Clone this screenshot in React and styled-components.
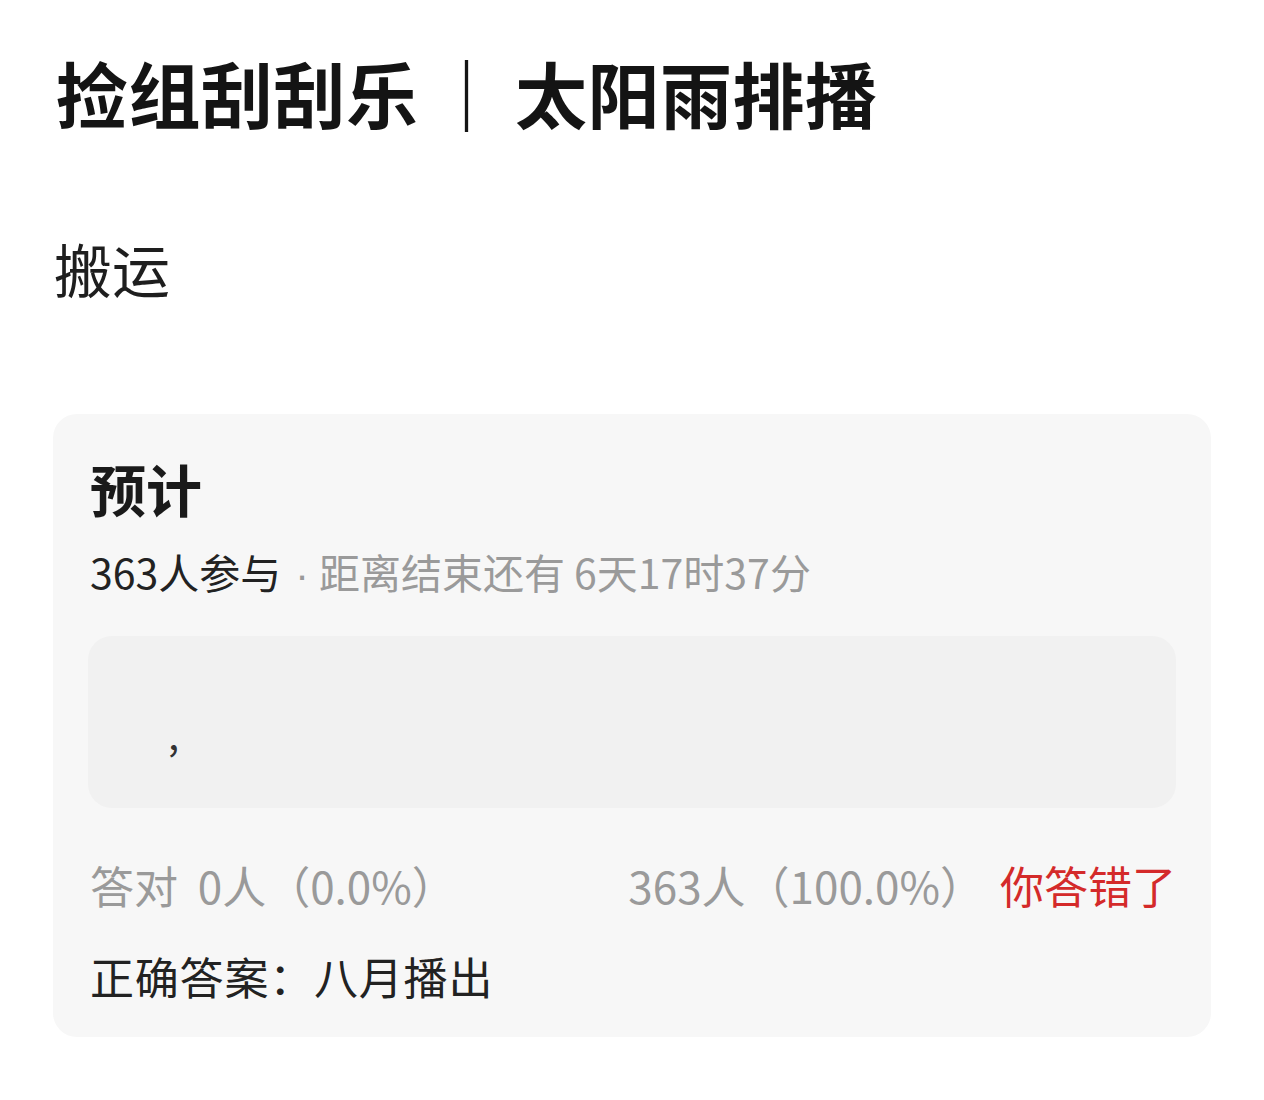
import React from 'react';
import styled, { createGlobalStyle } from 'styled-components';

const GlobalStyle = createGlobalStyle`
  html, body {
    margin: 0;
    padding: 0;
    background: #ffffff;
  }
  body {
    font-family: "Noto Sans CJK SC", "Noto Sans", sans-serif;
    color: #1a1a1a;
  }
`;

const Page = styled.div`
  width: 1264px;
  height: 1100px;
  box-sizing: border-box;
  padding: 52px 53px 0 53px;
  overflow: hidden;
`;

const Title = styled.h1`
  margin: 0 0 0 3px;
  font-size: 72px;
  line-height: 80px;
  font-weight: 700;
  color: #141414;
  letter-spacing: 0.5px;
`;

const Sep = styled.span`
  display: inline-block;
  margin: 0 12px;
`;

const Lead = styled.p`
  margin: 104px 0 0 1px;
  font-size: 58px;
  line-height: 64px;
  font-weight: 400;
  color: #1e1e1e;
`;

const Card = styled.section`
  margin-top: 114px;
  width: 1158px;
  box-sizing: border-box;
  background: #f7f7f7;
  border-radius: 24px;
  padding: 42px 35px 34px 35px;
`;

const CardTitle = styled.h2`
  margin: 0 0 0 2px;
  font-size: 56px;
  line-height: 64px;
  font-weight: 700;
  color: #1a1a1a;
`;

const Meta = styled.div`
  margin: 26px 0 0 2px;
  font-size: 41px;
  line-height: 50px;
  color: #222;
`;

const Muted = styled.span`
  color: #9a9a9a;
`;

const Dot = styled.span`
  display: inline-block;
  margin: 0 10px 0 14px;
  font-family: "Liberation Sans", sans-serif;
  color: #9a9a9a;
`;

const AnswerBox = styled.div`
  margin-top: 36px;
  height: 172px;
  box-sizing: border-box;
  border-radius: 24px;
  background: #f1f1f1;
  display: flex;
  align-items: center;
  padding: 22px 0 0 80px;
  font-size: 40px;
  color: #333;
`;

const Stats = styled.div`
  margin-top: 50px;
  display: flex;
  align-items: center;
  justify-content: space-between;
  padding-left: 2px;
  font-size: 44px;
  line-height: 54px;
  color: #9a9a9a;
`;

const StatGroup = styled.div`
  display: flex;
  align-items: center;
  gap: ${p => p.$gap || 0}px;
`;

const Wrong = styled.span`
  color: #d42a2a;
`;

const Correct = styled.div`
  margin-top: 37px;
  padding-left: 2px;
  font-size: 44px;
  line-height: 54px;
  color: #222;
  letter-spacing: 0.8px;
`;

export default function App() {
  return (
    <>
      <GlobalStyle />
      <Page>
        <Title>
          捡组刮刮乐<Sep>｜</Sep>太阳雨排播
        </Title>
        <Lead>搬运</Lead>
        <Card>
          <CardTitle>预计</CardTitle>
          <Meta>
            363人参与<Dot>·</Dot>
            <Muted>距离结束还有 6天17时37分</Muted>
          </Meta>
          <AnswerBox>,</AnswerBox>
          <Stats>
            <StatGroup>
              <span>答对&nbsp;&nbsp;0人（0.0%）</span>
            </StatGroup>
            <StatGroup $gap={16}>
              <span>363人（100.0%）</span>
              <Wrong>你答错了</Wrong>
            </StatGroup>
          </Stats>
          <Correct>正确答案：八月播出</Correct>
        </Card>
      </Page>
    </>
  );
}
